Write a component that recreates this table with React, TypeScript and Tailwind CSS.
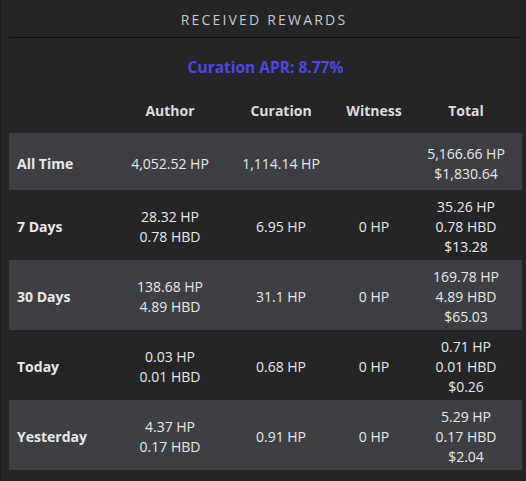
import React from 'react';

interface RewardRow {
  label: string;
  author: string[];
  curation: string;
  witness: string;
  total: string[];
  tall?: boolean;
}

const rows: RewardRow[] = [
  { label: 'All Time', author: ['4,052.52 HP'], curation: '1,114.14 HP', witness: '', total: ['5,166.66 HP', '$1,830.64'] },
  { label: '7 Days', author: ['28.32 HP', '0.78 HBD'], curation: '6.95 HP', witness: '0 HP', total: ['35.26 HP', '0.78 HBD', '$13.28'], tall: true },
  { label: '30 Days', author: ['138.68 HP', '4.89 HBD'], curation: '31.1 HP', witness: '0 HP', total: ['169.78 HP', '4.89 HBD', '$65.03'], tall: true },
  { label: 'Today', author: ['0.03 HP', '0.01 HBD'], curation: '0.68 HP', witness: '0 HP', total: ['0.71 HP', '0.01 HBD', '$0.26'], tall: true },
  { label: 'Yesterday', author: ['4.37 HP', '0.17 HBD'], curation: '0.91 HP', witness: '0 HP', total: ['5.29 HP', '0.17 HBD', '$2.04'], tall: true },
];

export default function App() {
  return (
    <div
      className="w-[526px] h-[481px] bg-[#252527] border-l border-[#1b1b1c] pl-[8px] pr-[4px] text-[14px] text-[#e8e8e8]"
      style={{ fontFamily: '"Open Sans", "Noto Sans", sans-serif' }}
    >
      <div className="h-[38px] border-b border-[#0f0f10] pt-[10px] text-center text-[14px] leading-[20px] tracking-[2.2px] text-[#c9c9c9] mr-[3px]">
        RECEIVED REWARDS
      </div>

      <div className="pt-[18px] text-center text-[15.5px] font-bold leading-[22px] text-[#4c48e4]">
        Curation APR: 8.77%
      </div>

      <table className="mt-[11px] w-[513px] table-fixed border-collapse text-center leading-[20px]">
        <colgroup>
          <col className="w-[107px]" />
          <col className="w-[108px]" />
          <col className="w-[114px]" />
          <col className="w-[72px]" />
          <col className="w-[112px]" />
        </colgroup>
        <thead>
          <tr className="h-[44px] font-bold text-[#dcdcdc]">
            <th />
            <th>Author</th>
            <th>Curation</th>
            <th>Witness</th>
            <th>Total</th>
          </tr>
        </thead>
        <tbody>
          {rows.map((row, idx) => (
            <tr
              key={row.label}
              className={`${idx % 2 === 0 ? 'bg-[#3e3f44]' : ''} ${row.tall ? 'h-[70px]' : 'h-[57px]'} [&>td]:pt-[4px]`}
            >
              <td className="pl-[8px] text-left font-bold text-[#e8e8e8]">{row.label}</td>
              <td>
                {row.author.map(v => (
                  <div key={v}>{v}</div>
                ))}
              </td>
              <td>{row.curation}</td>
              <td>{row.witness}</td>
              <td>
                {row.total.map(v => (
                  <div key={v}>{v}</div>
                ))}
              </td>
            </tr>
          ))}
        </tbody>
      </table>
    </div>
  );
}
